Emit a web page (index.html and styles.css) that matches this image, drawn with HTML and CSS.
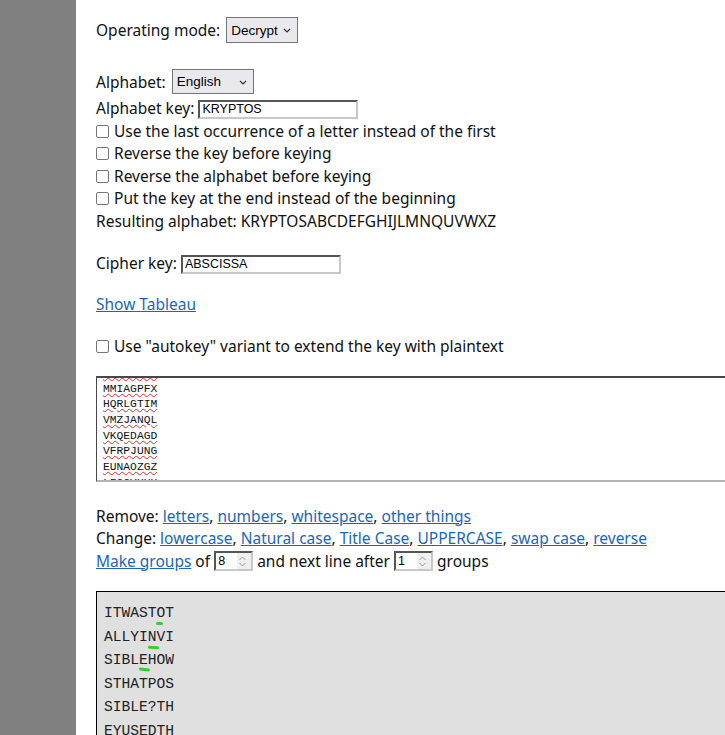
FILE: index.html
```html
<!DOCTYPE html>
<html>
<head>
<meta charset="utf-8">
<link rel="stylesheet" href="styles.css">
</head>
<body>
<div class="page">
  <aside class="sidebar"></aside>
  <main class="main">
    <div class="row row-mode">
      <span>Operating mode:</span>
      <span class="select sel-mode">Decrypt
        <svg class="chev" width="8" height="5" viewBox="0 0 8 5"><path d="M1 1 L4 4 L7 1" fill="none" stroke="#333" stroke-width="1.2"/></svg>
      </span>
    </div>

    <div class="row row-alpha">
      <span>Alphabet:</span>
      <span class="select sel-alpha">English
        <svg class="chev" width="8" height="5" viewBox="0 0 8 5"><path d="M1 1 L4 4 L7 1" fill="none" stroke="#333" stroke-width="1.2"/></svg>
      </span>
    </div>

    <div class="lines">
      <div class="line">Alphabet key: <span class="tinput">KRYPTOS</span></div>
      <label class="line"><span class="cb"></span>Use the last occurrence of a letter instead of the first</label>
      <label class="line"><span class="cb"></span>Reverse the key before keying</label>
      <label class="line"><span class="cb"></span>Reverse the alphabet before keying</label>
      <label class="line"><span class="cb"></span>Put the key at the end instead of the beginning</label>
      <div class="line">Resulting alphabet: KRYPTOSABCDEFGHIJLMNQUVWXZ</div>
    </div>

    <div class="line gap-cipher">Cipher key: <span class="tinput">ABSCISSA</span></div>

    <div class="line gap-tableau"><a href="#" class="link">Show Tableau</a></div>

    <label class="line gap-autokey"><span class="cb"></span>Use "autokey" variant to extend the key with plaintext</label>

    <div class="textarea">
      <div class="ta-inner">
        <div class="ta-line"><span class="sq">OBKRUOXO</span></div>
        <div class="ta-line"><span class="sq">MMIAGPFX</span></div>
        <div class="ta-line"><span class="sq">HQRLGTIM</span></div>
        <div class="ta-line"><span class="sq">VMZJANQL</span></div>
        <div class="ta-line"><span class="sq">VKQEDAGD</span></div>
        <div class="ta-line"><span class="sq">VFRPJUNG</span></div>
        <div class="ta-line"><span class="sq">EUNAOZGZ</span></div>
        <div class="ta-line"><span class="sq">LFCCYUXU</span></div>
      </div>
    </div>

    <div class="tools">
      <div class="line">Remove: <a href="#" class="link">letters</a>, <a href="#" class="link">numbers</a>, <a href="#" class="link">whitespace</a>, <a href="#" class="link">other things</a></div>
      <div class="line">Change: <a href="#" class="link">lowercase</a>, <a href="#" class="link">Natural case</a>, <a href="#" class="link">Title Case</a>, <a href="#" class="link">UPPERCASE</a>, <a href="#" class="link">swap case</a>, <a href="#" class="link">reverse</a></div>
      <div class="line"><a href="#" class="link">Make groups</a> of <span class="num">8<svg class="spin" width="9" height="13" viewBox="0 0 9 13"><path d="M1.5 5 L4.5 2 L7.5 5 M1.5 8 L4.5 11 L7.5 8" fill="none" stroke="#999" stroke-width="1"/></svg></span> and next line after <span class="num">1<svg class="spin" width="9" height="13" viewBox="0 0 9 13"><path d="M1.5 5 L4.5 2 L7.5 5 M1.5 8 L4.5 11 L7.5 8" fill="none" stroke="#999" stroke-width="1"/></svg></span> groups</div>
    </div>

    <div class="output">
      <div class="out-line">ITWAST<span class="mark m-o">O</span>T</div>
      <div class="out-line">ALLYI<span class="mark m-in">N</span>VI</div>
      <div class="out-line">SIBL<span class="mark m-e">E</span>HOW</div>
      <div class="out-line">STHATPOS</div>
      <div class="out-line">SIBLE?TH</div>
      <div class="out-line">EYUSEDTH</div>
      <div class="out-line">EEARTHSM</div>
    </div>
  </main>
</div>
</body>
</html>
```

FILE: styles.css
```css
html, body {
  margin: 0;
  padding: 0;
  background: #ffffff;
  overflow: hidden;
}

.page {
  display: flex;
  width: 725px;
  height: 735px;
  overflow: hidden;
  font-family: "Noto Sans", "DejaVu Sans", sans-serif;
  font-size: 15.5px;
  color: #111111;
}

.sidebar {
  flex: 0 0 76px;
  background: #808080;
}

.main {
  flex: 0 0 720px;
  padding: 17px 0 0 20px;
  box-sizing: border-box;
}

.row {
  display: flex;
  align-items: center;
  gap: 6px;
}

.row-mode { height: 26px; }
.row-alpha { height: 25px; margin-top: 26px; }

.select {
  position: relative;
  display: inline-flex;
  align-items: center;
  box-sizing: border-box;
  border: 1px solid #767676;
  background: #e9e9ed;
  font-family: "Liberation Sans", Arial, sans-serif;
  font-size: 13.5px;
  padding-left: 4px;
  color: #000;
}

.sel-mode { width: 72px; height: 26px; }
.sel-alpha { width: 82px; height: 25px; }

.chev {
  position: absolute;
  right: 6px;
  top: 50%;
  margin-top: -2px;
}

.lines { margin-top: 3px; }

.line {
  display: block;
  height: 22.5px;
  line-height: 22.5px;
  white-space: nowrap;
}

.tinput {
  display: inline-block;
  vertical-align: middle;
  box-sizing: border-box;
  width: 160px;
  height: 19px;
  line-height: 15px;
  padding-left: 2px;
  border-style: solid;
  border-width: 2px;
  border-color: #555555 #c8c8c8 #c8c8c8 #555555;
  font-family: "Liberation Sans", Arial, sans-serif;
  font-size: 12.5px;
  color: #000;
}

.cb {
  display: inline-block;
  vertical-align: middle;
  box-sizing: border-box;
  width: 13px;
  height: 13px;
  border: 1px solid #767676;
  border-radius: 2px;
  background: #fff;
  margin-right: 5px;
  position: relative;
  top: -1px;
}

.gap-cipher { margin-top: 20px; }
.gap-tableau { margin-top: 18px; }
.gap-autokey { margin-top: 20px; }

.link {
  color: #1c67b4;
  text-decoration: underline;
}

.textarea {
  margin-top: 18px;
  width: 700px;
  height: 106px;
  box-sizing: border-box;
  border-style: solid;
  border-width: 2px 2px 2px 1px;
  border-color: #474747 #b3b3b3 #b3b3b3 #474747;
  overflow: hidden;
  background: #fff;
}

.ta-inner {
  margin-top: -11.5px;
  padding-left: 6px;
  font-family: "Liberation Mono", monospace;
  font-size: 11.3px;
  color: #111;
}

.ta-line {
  height: 15.7px;
  line-height: 15.7px;
}

.sq {
  text-decoration: underline wavy #d43030;
  text-decoration-thickness: 1px;
  text-underline-offset: 1px;
}

.tools { margin-top: 23px; }

.num {
  display: inline-flex;
  vertical-align: middle;
  align-items: center;
  justify-content: space-between;
  box-sizing: border-box;
  width: 39px;
  height: 20px;
  padding: 0 4px 0 2px;
  border-style: solid;
  border-width: 2px;
  border-color: #555555 #c8c8c8 #c8c8c8 #555555;
  background: linear-gradient(to right, #fff 60%, #efefef 60%);
  font-family: "Liberation Sans", Arial, sans-serif;
  font-size: 12.5px;
  line-height: 16px;
  color: #000;
  position: relative;
  top: -1px;
}

.output {
  margin-top: 19px;
  width: 700px;
  border: 1px solid #000;
  background: #e0e0e0;
  padding: 10px 0 0 7px;
  font-family: "Liberation Mono", monospace;
  font-size: 14.6px;
  color: #222;
}

.out-line {
  height: 23.6px;
  line-height: 23.6px;
}

.mark { position: relative; }

.mark::after {
  content: "";
  position: absolute;
  height: 3px;
  border-radius: 2px;
  background: #2fd12a;
}

.m-o::after { left: -1px; width: 7px; top: 17px; }
.m-in::after { left: 0; width: 11px; top: 17px; transform: rotate(4deg); }
.m-e::after { left: 0; width: 11px; top: 16px; transform: rotate(6deg); }
```
